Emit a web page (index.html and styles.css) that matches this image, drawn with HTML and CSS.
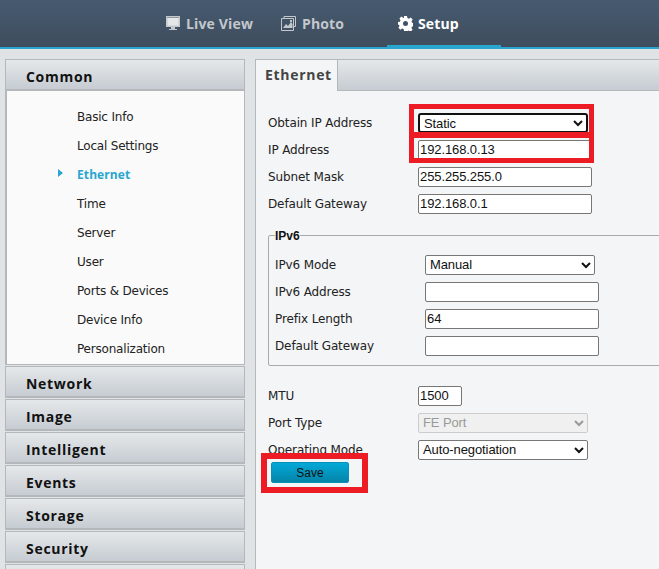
FILE: index.html
```html
<!DOCTYPE html>
<html lang="en">
<head>
<meta charset="utf-8">
<title>Ethernet</title>
<link rel="stylesheet" href="styles.css">
</head>
<body>
<header class="topbar">
  <nav class="topnav">
    <a class="toptab live">
      <svg width="15" height="15" viewBox="0 0 15 15"><path fill="#c3c8cd" d="M0 0h14v11H9v2h2v1H3v-1h2v-2H0z"/><path fill="#8f98a2" d="M1 1h12v1H1z"/><path fill="#e4e6e8" d="M1.500 2h11v7.500h-11z"/></svg>
      <span>Live View</span>
    </a>
    <a class="toptab photo">
      <svg width="15" height="15" viewBox="0 0 15 15"><path fill="none" stroke="#c3c8cd" d="M.5 2.500h12v12H.500zM3 2.500V.5h11.500v10h-2"/><path fill="#c3c8cd" d="M2 12l3-4 2 2 3-4 1.500 2v4zM9 4h2v2H9z"/></svg>
      <span>Photo</span>
    </a>
    <a class="toptab setup active">
      <svg width="15" height="15" viewBox="0 0 15 15"><path fill="#fff" fill-rule="evenodd" d="M6 0h3l.4 2 1.500.7L12.700 1.500l2 2.100-1.200 1.700.6 1.500 1.900.4v3l-2 .4-.6 1.500 1.200 1.700-2.100 2-1.700-1.200-1.400.6L9 15H6l-.4-1.900-1.500-.6-1.700 1.200-2-2 1.100-1.700L.9 8.500 0 8.900V6l1.900-.3.6-1.500L1.400 2.500l2-1.900 1.700 1.200L6 1.900zM7.500 5a2.500 2.500 0 1 0 0 5 2.500 2.500 0 0 0 0-5z"/></svg>
      <span>Setup</span>
    </a>
  </nav>
</header>

<div class="layout">
  <aside class="sidebar">
    <h2 class="group open">Common</h2>
    <ul class="menu">
      <li>Basic Info</li>
      <li>Local Settings</li>
      <li class="current">Ethernet</li>
      <li>Time</li>
      <li>Server</li>
      <li>User</li>
      <li>Ports &amp; Devices</li>
      <li>Device Info</li>
      <li>Personalization</li>
    </ul>
    <h2 class="group">Network</h2>
    <h2 class="group">Image</h2>
    <h2 class="group">Intelligent</h2>
    <h2 class="group">Events</h2>
    <h2 class="group">Storage</h2>
    <h2 class="group">Security</h2>
    <div class="group"></div>
  </aside>

  <main class="panel">
    <div class="tabbar"><div class="tab">Ethernet</div></div>
    <form class="form">
      <div class="row"><label>Obtain IP Address</label><select class="ctl sel-focus"><option>Static</option></select></div>
      <div class="row"><label>IP Address</label><input class="ctl txt" value="192.168.0.13"></div>
      <div class="row"><label>Subnet Mask</label><input class="ctl txt" value="255.255.255.0"></div>
      <div class="row"><label>Default Gateway</label><input class="ctl txt" value="192.168.0.1"></div>

      <fieldset class="v6">
        <legend>IPv6</legend>
        <div class="row"><label>IPv6 Mode</label><select class="ctl sel"><option>Manual</option></select></div>
        <div class="row"><label>IPv6 Address</label><input class="ctl txt"></div>
        <div class="row"><label>Prefix Length</label><input class="ctl txt" value="64"></div>
        <div class="row"><label>Default Gateway</label><input class="ctl txt"></div>
      </fieldset>

      <div class="row"><label>MTU</label><input class="ctl mtu" value="1500"></div>
      <div class="row"><label>Port Type</label><select class="ctl sel" disabled><option>FE Port</option></select></div>
      <div class="row"><label>Operating Mode</label><select class="ctl sel"><option>Auto-negotiation</option></select></div>
      <button type="button" class="save">Save</button>
    </form>
    <div class="mark mark-a"></div>
    <div class="mark mark-b"></div>
    <div class="mark mark-c"></div>
  </main>
</div>
</body>
</html>
```
FILE: styles.css
```css
* { box-sizing: border-box; }
html, body { margin: 0; height: 569px; overflow: hidden; }
body { background: #dfe3e6; font-family: "DejaVu Sans", sans-serif; font-size: 12px; letter-spacing: -0.12px; color: #222; }

.topbar { height: 49px; background: linear-gradient(#465a70, #3f4d5d); border-bottom: 2px solid #29a6d0; }
.topnav { display: flex; padding-left: 150px; height: 49px; }
.toptab { display: flex; align-items: center; gap: 5px; height: 49px; padding: 0 0 2px 16px; font-family: "Open Sans", sans-serif; font-size: 14px; font-weight: bold; letter-spacing: 0.15px; color: #c3c8cd; white-space: nowrap; }
.toptab svg { flex: none; }
.toptab span { line-height: 1; }
.live { width: 115px; }
.photo { width: 122px; gap: 6px; }
.setup { width: 114px; padding: 2px 0 0 11px; color: #fff; border-bottom: 4px solid #29a6d0; }

.layout { display: flex; height: 520px; overflow: hidden; padding: 10px 0 0 5px; }

.sidebar { width: 240px; flex: none; }
.group { margin: 1px 0 0; height: 32px; padding-left: 20px; font-family: "Open Sans", sans-serif; font-size: 14px; line-height: 33px; font-weight: bold; letter-spacing: 0.7px; color: #111; background: linear-gradient(#e5e8ea, #c6ccd2); border: 1px solid #b5b8ba; border-width: 1px 1px 2px; }
.group.open { margin-top: 0; }
.menu { list-style: none; margin: 0; padding: 12px 0 1px 70px; background: #fafafa; border: solid #b5b8ba; border-width: 0 1px 1px 2px; height: 274px; }
.menu li { height: 29px; line-height: 29px; position: relative; color: #222; letter-spacing: -0.2px; }
.menu .current { color: #29a6d0; font-family: "Open Sans", sans-serif; font-weight: bold; letter-spacing: 0.1px; line-height: 27px; }
.menu .current::before { content: ""; position: absolute; left: -19px; top: 8px; border-left: 5px solid #29a6d0; border-top: 4px solid transparent; border-bottom: 4px solid transparent; }

.panel { position: relative; width: 404px; flex: none; height: 510px; margin-left: 10px; background: #f4f5f7; border-left: 1px solid #b5b8ba; border-top: 1px solid #b5b8ba; overflow: hidden; }
.tabbar { height: 31px; background: linear-gradient(#e5e8ea, #c6ccd2); border-bottom: 1px solid #b5b8ba; }
.tab { width: 82px; height: 31px; padding-left: 9px; background: #f4f5f7; border-right: 1px solid #b5b8ba; font-family: "Open Sans", sans-serif; font-size: 14px; font-weight: bold; letter-spacing: 0.7px; line-height: 29px; color: #444; }

.form { padding: 18px 0 0 12px; }
.row { display: flex; align-items: center; height: 27px; }
.row label { width: 150px; flex: none; white-space: nowrap; }
.ctl { height: 20px; margin: 0; font-family: "Liberation Sans", sans-serif; font-size: 13px; letter-spacing: -0.1px; color: #111; background: #fff; border: 1px solid #777; border-radius: 2px; padding: 0 1px; }
.txt { width: 174px; }
.sel { width: 170px; padding: 0; }
.sel-focus { width: 170px; padding: 0; border: 2px solid #111; border-radius: 3px; }
.mtu { width: 44px; }
select:disabled { background: #f0f0f0; color: #999; border-color: #ccc; opacity: 1; }

.v6 { margin: 11px -30px 0 0; padding: 8px 0 0 6px; border: 1px solid #aaa; border-radius: 2px; height: 138px; }
.v6 legend { padding: 1px 0 0; font-family: "Liberation Sans", sans-serif; font-weight: bold; line-height: 14px; color: #111; font-size: 12px; letter-spacing: 0; }
.v6 + .row { margin-top: 16px; }

.save { display: block; width: 78px; height: 21px; margin: -1px 0 0 3px; padding: 0; font-family: "Liberation Sans", sans-serif; font-size: 12px; color: #111; background: linear-gradient(#02a9d8, #0584a8); border: 1px solid #0a8fb5; border-radius: 2px; }

.mark { position: absolute; border: 5px solid #ed1c24; }
.mark-a { left: 153px; top: 44px; width: 185px; height: 34px; }
.mark-b { left: 153px; top: 72px; width: 185px; height: 31px; }
.mark-c { left: 5px; top: 393px; width: 107px; height: 40px; border-width: 6px; }
```
